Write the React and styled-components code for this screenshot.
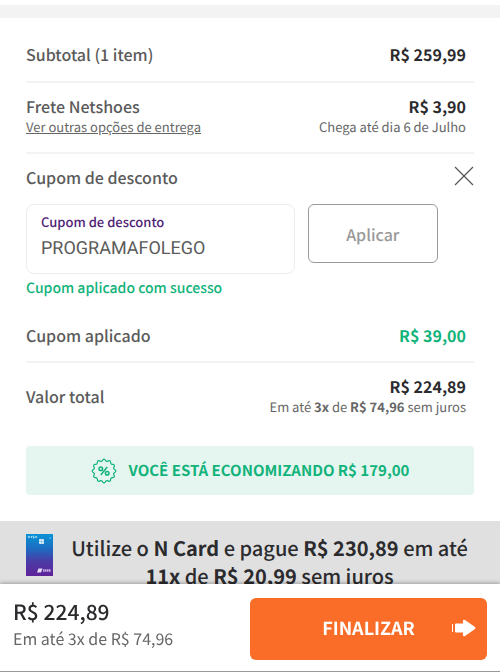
import React, { useState } from "react";
import styled, { createGlobalStyle } from "styled-components";

export default function App() {
  const [coupon, setCoupon] = useState("PROGRAMAFOLEGO");

  return (
    <>
      <GlobalStyle />
      <Band />
      <Summary>
        <Row>
          <Label>Subtotal (1 item)</Label>
          <Values>
            <Price>R$ 259,99</Price>
          </Values>
        </Row>
        <Row>
          <div>
            <Label>Frete Netshoes</Label>
            <DeliveryLink href="#entrega">Ver outras opções de entrega</DeliveryLink>
          </div>
          <Values>
            <Price>R$ 3,90</Price>
            <Detail>Chega até dia 6 de Julho</Detail>
          </Values>
        </Row>
        <CouponHeader>
          <Label>Cupom de desconto</Label>
          <CloseButton type="button" aria-label="Fechar">
            <svg width="20" height="20" viewBox="0 0 20 20">
              <path d="M1 1L19 19M19 1L1 19" stroke="#555" strokeWidth="1.2" />
            </svg>
          </CloseButton>
        </CouponHeader>
        <CouponForm onSubmit={(e) => e.preventDefault()}>
          <Field>
            <FieldLabel htmlFor="coupon">Cupom de desconto</FieldLabel>
            <FieldInput
              id="coupon"
              value={coupon}
              onChange={(e) => setCoupon(e.target.value)}
            />
          </Field>
          <ApplyButton>Aplicar</ApplyButton>
        </CouponForm>
        <Success>Cupom aplicado com sucesso</Success>
        <Row>
          <Label>Cupom aplicado</Label>
          <Values>
            <Price $green>R$ 39,00</Price>
          </Values>
        </Row>
        <TotalRow>
          <Label>Valor total</Label>
          <Values>
            <Price>R$ 224,89</Price>
            <Detail>
              Em até <b>3x</b> de <b>R$ 74,96</b> sem juros
            </Detail>
          </Values>
        </TotalRow>
        <Savings>
          <PercentIcon />
          VOCÊ ESTÁ ECONOMIZANDO R$ 179,00
        </Savings>
      </Summary>
      <Promo>
        <CardIcon />
        <PromoText>
          Utilize o <b>N Card</b> e pague <b>R$ 230,89</b> em até <b>11x</b> de{" "}
          <b>R$ 20,99</b> sem juros
        </PromoText>
      </Promo>
      <Checkout>
        <div>
          <CheckoutPrice>R$ 224,89</CheckoutPrice>
          <CheckoutDetail>Em até 3x de R$ 74,96</CheckoutDetail>
        </div>
        <FinishButton type="button">
          <span>FINALIZAR</span>
          <ArrowIcon />
        </FinishButton>
      </Checkout>
    </>
  );
}

// scalloped seal: alternate the radius around a circle and smooth it
const sealPath = () => {
  const steps = 120;
  const points = [];
  for (let i = 0; i < steps; i++) {
    const a = (i / steps) * Math.PI * 2;
    const r = 10.9 + 0.9 * Math.cos(a * 12);
    points.push(
      `${(13 + r * Math.sin(a)).toFixed(2)} ${(13 - r * Math.cos(a)).toFixed(2)}`
    );
  }
  return `M${points.join("L")}Z`;
};

const PercentIcon = () => (
  <svg width="26" height="26" viewBox="0 0 26 26" fill="none" stroke="#12b37a">
    <path d={sealPath()} strokeWidth="1.2" />
    <circle cx="9.8" cy="10.8" r="1.8" strokeWidth="1.5" />
    <circle cx="16.2" cy="15.2" r="1.8" strokeWidth="1.5" />
    <path d="M16.2 9L9.8 17" strokeWidth="1.5" />
  </svg>
);

const CardIcon = () => (
  <svg width="27" height="42" viewBox="0 0 27 42">
    <defs>
      <linearGradient id="card" x1="0" y1="0" x2="0" y2="1">
        <stop offset="0" stopColor="#0a93d6" />
        <stop offset="0.35" stopColor="#1c6cc0" />
        <stop offset="0.65" stopColor="#4b3ba6" />
        <stop offset="1" stopColor="#5f2398" />
      </linearGradient>
    </defs>
    <rect width="27" height="42" fill="url(#card)" />
    <path
      d="M2 2L3 4L4 2M5.5 2V4M8 2H7V3H8V4H7M9 4L10 2L11 4"
      fill="none"
      stroke="#bfe9fa"
      strokeWidth="0.8"
    />
    <rect x="13" y="5" width="5" height="5" rx="1" fill="#d8eef8" />
    <path d="M15.5 5V10M13 7.5H18" stroke="#7fb6dc" strokeWidth="0.6" />
    <circle cx="24" cy="4" r="1" fill="#45b5e8" />
    <path d="M12.5 34.5H16.5L15 38.5H11Z" fill="#e6d9f5" />
    <path
      d="M17 36.5H25"
      stroke="#c3a9e2"
      strokeWidth="2.4"
      strokeDasharray="1.6 0.4"
    />
  </svg>
);

const ArrowIcon = () => (
  <svg width="24" height="18" viewBox="0 0 24 18" fill="#fff">
    <rect x="0" y="5" width="1" height="8" />
    <path d="M3 5.5Q3 4.5 4 4.5H11V2Q11 0 13 1L23 8Q24 9 23 10L13 17Q11 18 11 16V13.5H4Q3 13.5 3 12.5Z" />
  </svg>
);

const GlobalStyle = createGlobalStyle`
  * {
    box-sizing: border-box;
  }
  body {
    margin: 0;
    background: #fff;
    color: #2b2b2e;
    font-family: "Noto Sans CJK SC", "Noto Sans", sans-serif;
    text-rendering: geometricPrecision;
  }
  button, input {
    font-family: inherit;
    text-rendering: inherit;
  }
`;

const Band = styled.div`
  height: 13px;
  margin-top: 5px;
  background: #f3f3f3;
`;

const Summary = styled.main`
  padding: 0 26px 26px;
`;

const Row = styled.section`
  display: flex;
  justify-content: space-between;
  align-items: center;
  padding: 12px 8px 15px 0;
  border-bottom: 2px solid #f3f3f3;

  &:first-child {
    padding-top: 25px;
    padding-bottom: 16px;
  }
`;

const TotalRow = styled(Row)`
  padding-bottom: 29px;
  border-bottom: none;
`;

const Label = styled.div`
  font-size: 16px;
  font-weight: 500;
  line-height: 22px;
  color: #5b5b5b;
`;

const Values = styled.div`
  text-align: right;
`;

const Price = styled.div`
  font-size: 16px;
  font-weight: 700;
  line-height: 22px;
  color: ${(props) => (props.$green ? "#12b37a" : "#2b2b2e")};
`;

const Detail = styled.div`
  font-size: 13px;
  line-height: 20px;
  color: #666;
`;

const DeliveryLink = styled.a`
  display: block;
  font-size: 13px;
  line-height: 20px;
  color: #666;
`;

const CouponHeader = styled.div`
  display: flex;
  justify-content: space-between;
  align-items: flex-start;
  padding: 12px 0 16px;
`;

const CloseButton = styled.button`
  display: flex;
  padding: 0;
  border: none;
  background: none;
`;

const CouponForm = styled.form`
  display: flex;
  align-items: flex-start;
  gap: 13px;
`;

const Field = styled.div`
  flex: 0 0 60%;
  padding: 7px 14px 9px;
  border: 1px solid #ececec;
  border-radius: 8px;
`;

const FieldLabel = styled.label`
  display: block;
  font-size: 13px;
  font-weight: 500;
  line-height: 20px;
  color: #4f2275;
`;

const FieldInput = styled.input`
  display: block;
  width: 100%;
  height: 32px;
  padding: 0;
  border: none;
  outline: none;
  background: none;
  color: #5b5b5b;

  && {
    font-family: Roboto, sans-serif;
    font-size: 18px;
  }
`;

const ApplyButton = styled.button`
  flex: 0 0 29%;
  height: 59px;
  border: 1px solid #9a9a9a;
  border-radius: 6px;
  background: #fff;
  font-size: 16px;
  font-weight: 500;
  color: #999;
`;

const Success = styled.div`
  padding: 4px 0 14px;
  font-size: 14px;
  font-weight: 500;
  line-height: 20px;
  color: #12b37a;
`;

const Savings = styled.div`
  display: flex;
  justify-content: center;
  align-items: center;
  gap: 12px;
  height: 49px;
  border-radius: 4px;
  background: #e5f6f1;
  font-size: 15px;
  font-weight: 700;
  color: #12b37a;
`;

const Promo = styled.section`
  display: flex;
  align-items: flex-start;
  gap: 12px;
  padding: 13px 26px;
  background: #e0e0e0;
`;

const PromoText = styled.p`
  flex: 1;
  margin: 0;
  font-size: 20px;
  font-weight: 500;
  line-height: 28px;
  text-align: center;
`;

const Checkout = styled.footer`
  position: fixed;
  left: 0;
  right: 0;
  bottom: 0;
  display: flex;
  justify-content: space-between;
  padding: 14px 13px 11px;
  border-bottom: 1px solid #999;
  background: #fff;
  box-shadow: 0 -1px 4px rgba(0, 0, 0, 0.3);
`;

const CheckoutPrice = styled.div`
  font-size: 21px;
  font-weight: 500;
  line-height: 28px;
`;

const CheckoutDetail = styled.div`
  font-size: 16px;
  line-height: 24px;
  color: #666;
`;

const FinishButton = styled.button`
  display: grid;
  grid-template-columns: 1fr auto 1fr;
  align-items: center;
  width: 50%;
  height: 62px;
  padding: 0 11px 2px;
  border: none;
  border-radius: 6px;
  background: #f96d28;
  font-size: 18px;
  font-weight: 700;
  color: #fff;

  span {
    grid-column: 2;
  }
  svg {
    justify-self: end;
  }
`;
